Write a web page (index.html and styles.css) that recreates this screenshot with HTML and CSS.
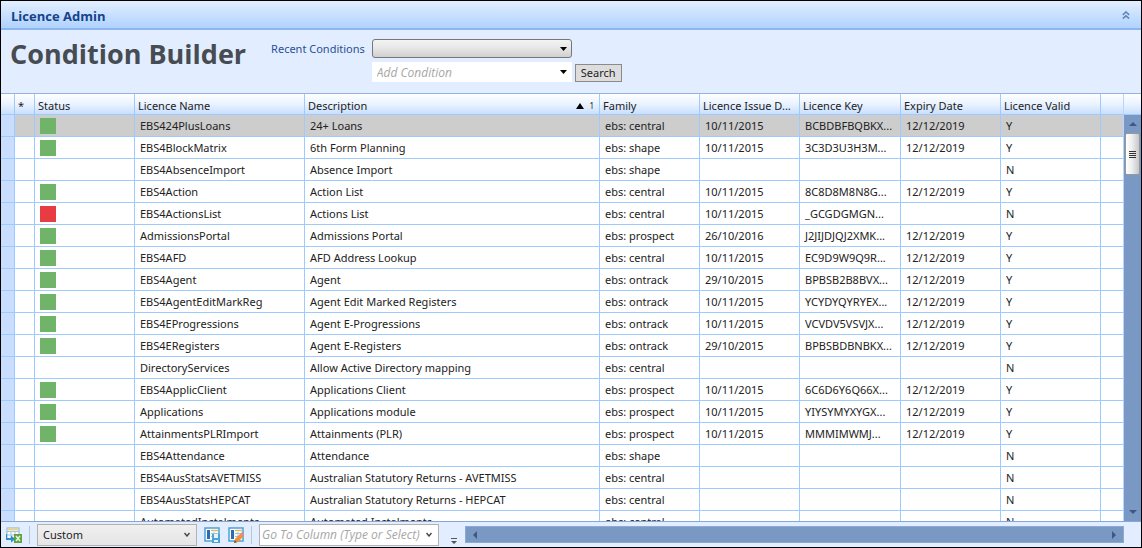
FILE: index.html
```html
<!DOCTYPE html>
<html lang="en">
<head>
<meta charset="utf-8">
<title>Licence Admin</title>
<link rel="stylesheet" href="styles.css">
</head>
<body>
<main class="window">
  <header class="titlebar">
    <h2 class="titlebar-text">Licence Admin</h2>
    <button class="collapse" aria-label="Collapse">
      <svg width="8" height="8" viewBox="0 0 8 8"><path d="M0.8 3.8 4 1l3.2 2.8M0.8 7.6 4 4.8l3.2 2.8" fill="none" stroke="#5f86b8" stroke-width="1.6"/></svg>
    </button>
  </header>
  <section class="builder">
    <h1 class="heading">Condition Builder</h1>
    <div class="conditions">
      <label class="recent-label" for="recent">Recent Conditions</label>
      <span class="combo combo-raised">
        <select id="recent" class="combo-field"><option></option></select>
        <svg class="combo-arrow" width="7" height="4" viewBox="0 0 7 4"><path d="M0 0h7L3.500 4z"/></svg>
      </span>
      <span class="combo combo-flat">
        <input class="combo-field" type="text" placeholder="Add Condition" aria-label="Add Condition">
        <svg class="combo-arrow" width="7" height="4" viewBox="0 0 7 4"><path d="M0 0h7L3.500 4z"/></svg>
      </span>
      <button class="search">Search</button>
    </div>
  </section>
  <section class="grid">
    <div class="grid-view">
      <table class="licences">
        <colgroup>
          <col class="c-gutter"><col class="c-mark"><col class="c-status"><col class="c-name"><col class="c-desc">
          <col class="c-std"><col class="c-std"><col class="c-key"><col class="c-std"><col class="c-std"><col class="c-end">
        </colgroup>
        <thead>
          <tr><th></th><th class="mark">*</th><th>Status</th><th>Licence Name</th>
          <th><span class="sorted">Description<span class="sort"><svg width="8" height="6" viewBox="0 0 8 6"><path d="M0 6h8L4 0z"/></svg><small class="sort-order">1</small></span></span></th>
          <th>Family</th><th>Licence Issue D...</th><th>Licence Key</th><th>Expiry Date</th><th>Licence Valid</th><th></th></tr>
        </thead>
        <tbody id="rows"></tbody>
      </table>
    </div>
    <div class="vscroll">
      <div class="vscroll-head"></div>
      <div class="vscroll-track">
        <button class="arrow-v" aria-label="Scroll up"><svg width="8" height="4" viewBox="0 0 8 4"><path d="M0 4h8L4 0z"/></svg></button>
        <div class="thumb"><i class="grip"></i><i class="grip"></i><i class="grip"></i><i class="grip"></i></div>
        <button class="arrow-v arrow-last" aria-label="Scroll down"><svg width="8" height="4" viewBox="0 0 8 4"><path d="M0 0h8L4 4z"/></svg></button>
      </div>
    </div>
  </section>
  <footer class="toolbar">
    <button class="tool" aria-label="Export to Excel">
      <svg width="16" height="16" viewBox="0 0 16 16"><rect x="1" y="1" width="12" height="11" fill="#fff" stroke="#7fb4d8"/><path d="M1.500 1.500h11v2h-11z" fill="#f0cf85"/><path d="M1 4.500h12M1 8h12M5 4v8M9 4v8" stroke="#9cc6df"/><path d="M1 7v4h4V8.500l4.500 3.500L5 15.500V13H0V7z" fill="#2f8cc8"/><rect x="8" y="7" width="8" height="9" fill="#5fa345"/><path d="m10 9 4 5m0-5-4 5" stroke="#e6f3dd" stroke-width="1.500"/></svg>
    </button>
    <span class="divider"></span>
    <span class="bar-combo bar-combo-view">
      <select class="combo-field" aria-label="View"><option>Custom</option></select>
      <svg class="combo-arrow" width="6" height="5" viewBox="0 0 6 5"><path d="m0.500 1 2.500 3 2.500-3" fill="none" stroke="#444" stroke-width="1.400"/></svg>
    </span>
    <button class="tool" aria-label="Save layout">
      <svg width="16" height="16" viewBox="0 0 16 16"><rect x="1" y="1" width="14" height="13" fill="#fff" stroke="#4ba3d6" stroke-width="1.500"/><path d="M3 3h3v9H3z" fill="#2b6db3"/><path d="M7 3.500h7" stroke="#e5b95d" stroke-width="1.500"/><path d="M7 6.500h7M7 9.500h7M10 5v7" stroke="#9cc6df"/><path d="M8 7h8v9H8z" fill="#4ba3d6"/><path d="M10 7h4v4h-4zM10 13h4v2h-4z" fill="#e6f3fb"/></svg>
    </button>
    <button class="tool" aria-label="Edit layout">
      <svg width="16" height="16" viewBox="0 0 16 16"><rect x="1" y="1" width="14" height="13" fill="#fff" stroke="#4ba3d6" stroke-width="1.500"/><path d="M3 3h3v9H3z" fill="#2b6db3"/><path d="M7 3.500h7" stroke="#e5b95d" stroke-width="1.500"/><path d="M7 6.500h7M7 9.500h7M10 5v8" stroke="#9cc6df"/><path d="m6 16 1-4 5.500-5.500 3 3L10 15z" fill="#f0923a"/><path d="m6 16 .8-3 2.200 2.200z" fill="#6b5a4a"/><path d="m12.500 6.500 1.500-1.500 2 1v2l-1 1.500z" fill="#d98a8d"/></svg>
    </button>
    <span class="divider"></span>
    <span class="bar-combo bar-combo-goto">
      <input class="combo-field" type="text" placeholder="Go To Column (Type or Select)" aria-label="Go To Column">
      <svg class="combo-arrow" width="6" height="5" viewBox="0 0 6 5"><path d="m0.500 1 2.500 3 2.500-3" fill="none" stroke="#444" stroke-width="1.400"/></svg>
    </span>
    <button class="overflow" aria-label="More"><svg width="6" height="7" viewBox="0 0 6 7"><path d="M0 0h6v1H0zM0 3h6L3 6z" fill="#555"/></svg></button>
    <div class="hscroll">
      <button class="arrow-h" aria-label="Scroll left"><svg width="4" height="8" viewBox="0 0 4 8"><path d="M4 0v8L0 4z"/></svg></button>
      <button class="arrow-h" aria-label="Scroll right"><svg width="4" height="8" viewBox="0 0 4 8"><path d="M0 0v8l4-4z"/></svg></button>
    </div>
  </footer>
</main>
<script src="rows.js"></script>
</body>
</html>
```

FILE: rows.js
```js
const licences = [
  ["green", "EBS424PlusLoans", "24+ Loans", "ebs: central", "10/11/2015", "BCBDBFBQBKX...", "12/12/2019", "Y"],
  ["green", "EBS4BlockMatrix", "6th Form Planning", "ebs: shape", "10/11/2015", "3C3D3U3H3M...", "12/12/2019", "Y"],
  ["", "EBS4AbsenceImport", "Absence Import", "ebs: shape", "", "", "", "N"],
  ["green", "EBS4Action", "Action List", "ebs: central", "10/11/2015", "8C8D8M8N8G...", "12/12/2019", "Y"],
  ["red", "EBS4ActionsList", "Actions List", "ebs: central", "10/11/2015", "_GCGDGMGN...", "", "N"],
  ["green", "AdmissionsPortal", "Admissions Portal", "ebs: prospect", "26/10/2016", "J2JIJDJQJ2XMK...", "12/12/2019", "Y"],
  ["green", "EBS4AFD", "AFD Address Lookup", "ebs: central", "10/11/2015", "EC9D9W9Q9R...", "12/12/2019", "Y"],
  ["green", "EBS4Agent", "Agent", "ebs: ontrack", "29/10/2015", "BPBSB2B8BVX...", "12/12/2019", "Y"],
  ["green", "EBS4AgentEditMarkReg", "Agent Edit Marked Registers", "ebs: ontrack", "10/11/2015", "YCYDYQYRYEX...", "12/12/2019", "Y"],
  ["green", "EBS4EProgressions", "Agent E-Progressions", "ebs: ontrack", "10/11/2015", "VCVDV5VSVJX...", "12/12/2019", "Y"],
  ["green", "EBS4ERegisters", "Agent E-Registers", "ebs: ontrack", "29/10/2015", "BPBSBDBNBKX...", "12/12/2019", "Y"],
  ["", "DirectoryServices", "Allow Active Directory mapping", "ebs: central", "", "", "", "N"],
  ["green", "EBS4ApplicClient", "Applications Client", "ebs: prospect", "10/11/2015", "6C6D6Y6Q66X...", "12/12/2019", "Y"],
  ["green", "Applications", "Applications module", "ebs: prospect", "10/11/2015", "YIYSYMYXYGX...", "12/12/2019", "Y"],
  ["green", "AttainmentsPLRImport", "Attainments (PLR)", "ebs: prospect", "10/11/2015", "MMMIMWMJ...", "12/12/2019", "Y"],
  ["", "EBS4Attendance", "Attendance", "ebs: shape", "", "", "", "N"],
  ["", "EBS4AusStatsAVETMISS", "Australian Statutory Returns - AVETMISS", "ebs: central", "", "", "", "N"],
  ["", "EBS4AusStatsHEPCAT", "Australian Statutory Returns - HEPCAT", "ebs: central", "", "", "", "N"],
  ["", "AutomatedInstalments", "Automated Instalments", "ebs: central", "", "", "", "N"]
];

const body = document.getElementById("rows");
licences.forEach(([status, ...values], index) => {
  const row = body.insertRow();
  if (index === 0) row.className = "selected";
  row.insertCell();
  row.insertCell();
  const cell = row.insertCell();
  if (status) {
    const chip = document.createElement("span");
    chip.className = "chip chip-" + status;
    cell.append(chip);
  }
  values.forEach(value => { row.insertCell().textContent = value; });
  row.insertCell();
});
```

FILE: styles.css
```css
* { box-sizing: border-box; }
body { margin: 0; font: 11px/16px "Noto Sans", "Open Sans", sans-serif; color: #222; }
button, input, select { font: inherit; color: inherit; margin: 0; padding: 0; border: 0; background: none; border-radius: 0; appearance: none; outline: 0; }
h1, h2 { margin: 0; }
svg { display: block; }
.window { display: flex; flex-direction: column; height: 100vh; border: 1px solid #000; background: #e2eeff; overflow: hidden; }
.titlebar { display: flex; align-items: center; justify-content: space-between; height: 29px; flex: none; padding: 0 11px 0 10px; background: linear-gradient(#e3efff, #afd2ff); border-bottom: 2px solid #8db6ec; }
.titlebar-text { font-family: "Open Sans", sans-serif; font-size: 13px; line-height: 18px; padding-top: 2px; font-weight: 700; color: #15428b; }
.builder { display: flex; align-items: flex-start; height: 63px; flex: none; padding: 0 9px; gap: 25px; }
.heading { font-family: "Open Sans", sans-serif; font-size: 27px; line-height: 36px; padding-top: 6px; font-weight: 700; color: #474b52; }
.conditions { display: grid; grid-template-columns: auto 200px auto; column-gap: 3px; row-gap: 4px; align-items: center; padding-top: 9px; }
.recent-label { padding: 1px 4px 0 0; color: #2b4f94; }
.combo { display: flex; align-items: center; height: 20px; padding: 0 5px; }
.combo-raised { height: 19px; border: 1px solid #777; border-radius: 3px; background: linear-gradient(#f3f3f3, #e8e8e8 45%, #d0d0d0); grid-column: 2; padding: 0 4px; }
.combo-flat { grid-column: 2; background: #fff; }
.combo-field { flex: 1; min-width: 0; width: 0; height: 100%; }
.combo-arrow { flex: none; pointer-events: none; }
input.combo-field { font-family: "Open Sans", sans-serif; font-size: 12px; }
::placeholder { color: #a6a6a6; font-style: italic; opacity: 1; }
.search { grid-column: 3; align-self: end; border: 1px solid #8a8a8a; background: #ddd; height: 18px; line-height: 16px; padding: 0 5px; }
.grid { display: flex; flex: 1; min-height: 0; border-top: 1px solid #92b4e0; border-bottom: 1px solid #86a6d8; background: #fff; }
.grid-view { flex: 1; min-width: 0; overflow: hidden; }
.licences { width: 100%; table-layout: fixed; border-collapse: separate; border-spacing: 0; }
.c-gutter { width: 14px; }
.c-mark { width: 20px; }
.c-status { width: 100px; }
.c-name { width: 170px; }
.c-std { width: 100px; }
.c-key { width: 101px; }
.c-end { width: 23px; }
th, td { height: 22px; padding: 0 0 0 5px; border-right: 1px solid #9dcaff; border-bottom: 1px solid #9dcaff; text-align: left; font-weight: 400; white-space: nowrap; overflow: hidden; }
th { height: 21px; padding: 3px 5px 0 3px; background: linear-gradient(#fff, #eaf3ff 50%, #c9dfff); }
th:last-child, td:last-child { border-right-color: #b5d6ff; }
td:first-child { background: #c9deff; }
.selected td:not(:first-child) { background: #cdcdcd; }
.sorted, .sort { display: flex; align-items: center; justify-content: space-between; }
.sort { gap: 5px; }
.sort-order { font-size: 8px; }
.chip { display: block; width: 16px; height: 16px; }
.chip-green { background: #6fb468; }
.chip-red { background: #e83c43; }
.vscroll { display: flex; flex-direction: column; width: 17px; flex: none; }
.vscroll-head { height: 21px; flex: none; border-bottom: 1px solid #9dcaff; background: linear-gradient(#fff, #eaf3ff 50%, #c9dfff); }
.vscroll-track { display: flex; flex-direction: column; flex: 1; padding: 0 1px; background: #7999c4; }
.arrow-v { display: flex; align-items: center; justify-content: center; height: 18px; fill: #3d5884; }
.arrow-last { margin-top: auto; }
.thumb { display: flex; flex-direction: column; align-items: center; justify-content: center; gap: 1px; height: 42px; border: 1px solid #999; border-radius: 2px; background: linear-gradient(90deg, #fff, #eee 45%, #c4c7cc); }
.grip { width: 7px; height: 1px; background: #333; }
.toolbar { display: flex; align-items: center; height: 25px; flex: none; padding: 0 17px 0 5px; }
.tool { width: 16px; height: 16px; flex: none; }
.tool + .tool { margin-left: 8px; }
.divider { width: 1px; height: 18px; margin: 0 7px; background: #b8c6da; flex: none; }
.bar-combo { display: flex; align-items: center; flex: none; height: 22px; padding: 0 6px 0 5px; border: 1px solid #b2b2b2; }
.bar-combo-view { width: 160px; margin-right: 7px; background: linear-gradient(#f0f0f0, #e5e5e5); }
.bar-combo-goto { width: 180px; padding-left: 2px; background: #fff; }
.overflow { align-self: flex-end; margin: 0 8px 2px 12px; flex: none; }
.hscroll { display: flex; align-items: center; justify-content: space-between; flex: 1; height: 17px; padding: 0 7px; background: #7999c4; border: 1px solid #8eaad0; fill: #3d5884; }
```
